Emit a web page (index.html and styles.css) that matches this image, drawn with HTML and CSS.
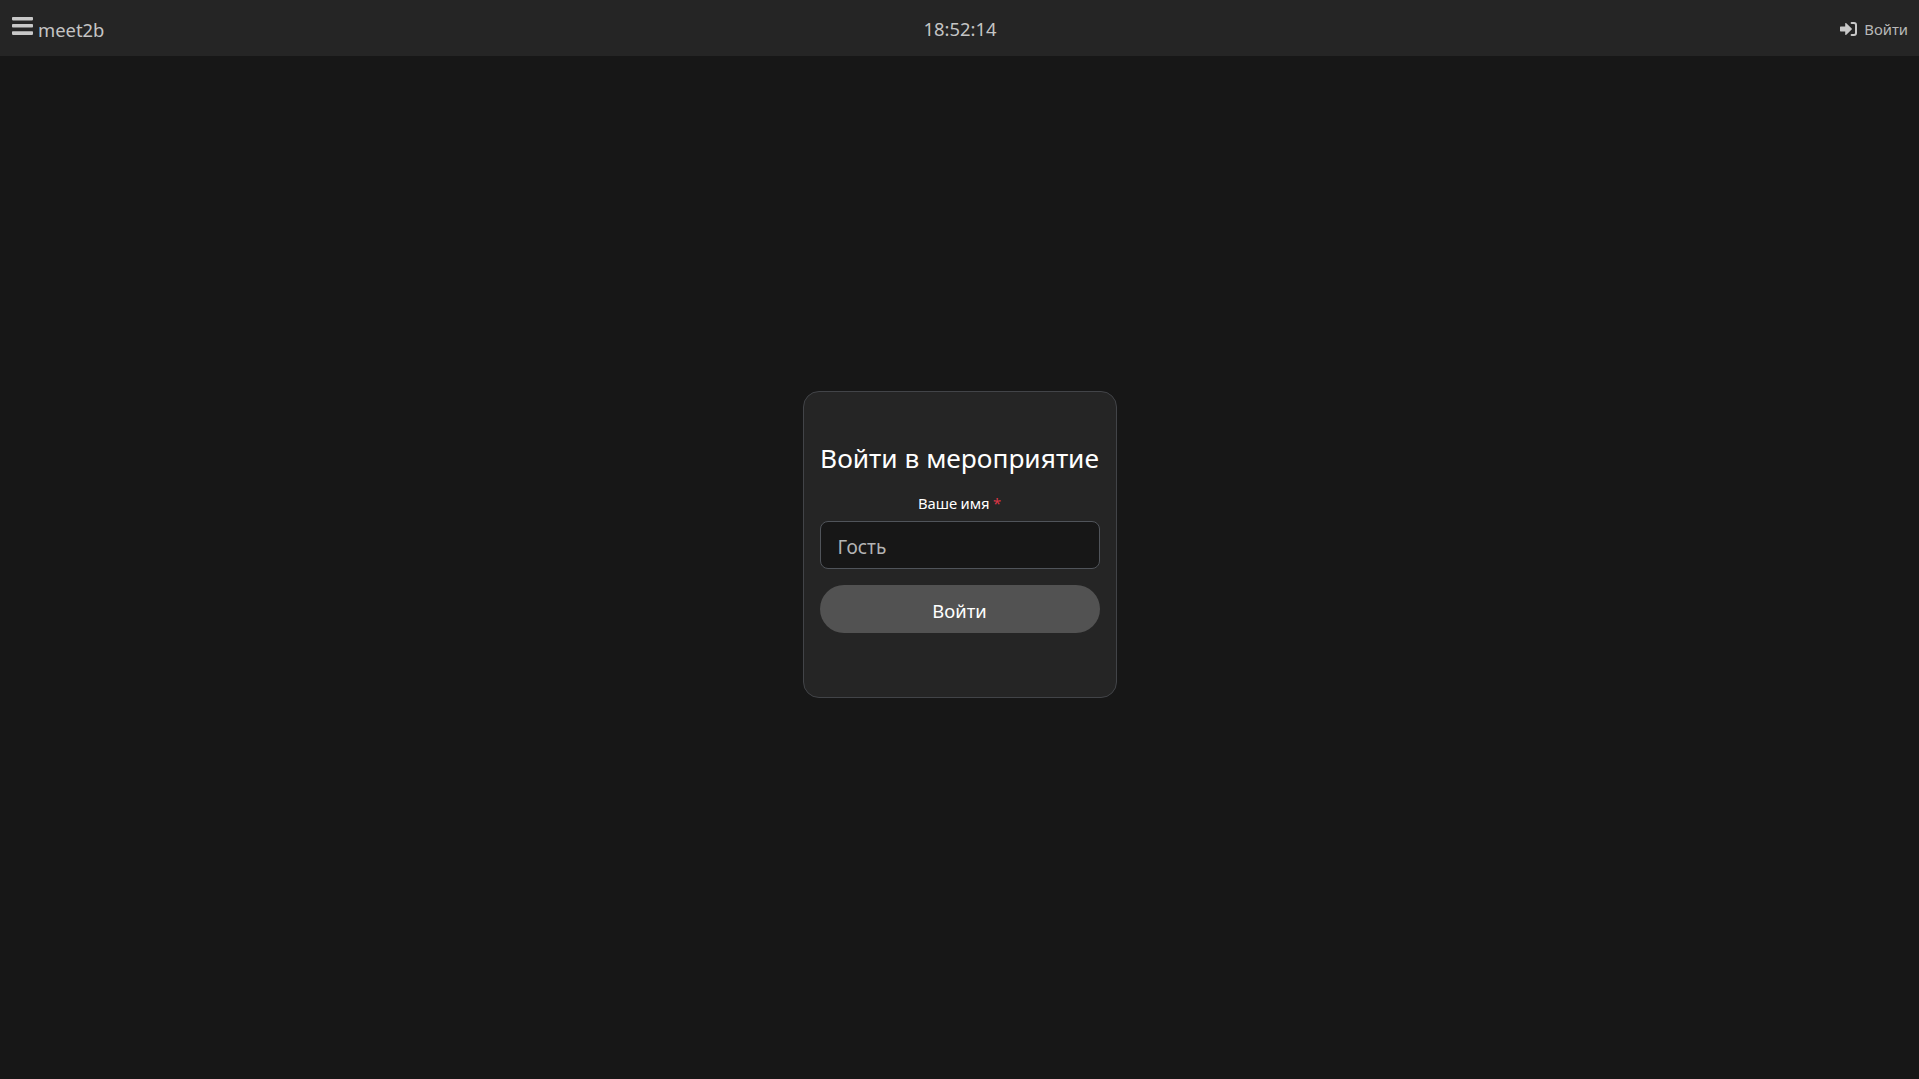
FILE: index.html
```html
<!DOCTYPE html>
<html lang="ru">
<head>
<meta charset="utf-8">
<title>meet2b</title>
<link rel="stylesheet" href="styles.css">
</head>
<body>
<header class="topbar">
  <div class="brand">
    <svg class="burger" viewBox="0 0 21 18" width="21" height="18" aria-hidden="true"><rect x="0" y="0" width="21" height="3.4" rx="0.8"/><rect x="0" y="7" width="21" height="3.6" rx="0.8"/><rect x="0" y="14.3" width="21" height="3.6" rx="0.8"/></svg>
    <span class="brand-name">meet2b</span>
  </div>
  <div class="clock">18:52:14</div>
  <a class="signin" href="#">
    <svg class="signin-icon" viewBox="0 0 17 14" width="17" height="14" aria-hidden="true"><path d="M0.6 4.6h4.6V1.4a0.5 0.5 0 0 1 0.85-0.35L11.7 6.5a0.7 0.7 0 0 1 0 1L6.05 12.95a0.5 0.5 0 0 1-0.85-0.35V9.4H0.6a0.6 0.6 0 0 1-0.6-0.6V5.2a0.6 0.6 0 0 1 0.6-0.6z"/><path d="M11.6 1h2.4a2 2 0 0 1 2 2v8a2 2 0 0 1-2 2h-2.4" fill="none" stroke="currentColor" stroke-width="2" stroke-linecap="round"/></svg>
    <span>Войти</span>
  </a>
</header>
<main class="stage">
  <form class="card">
    <h1 class="title">Войти в мероприятие</h1>
    <label class="label" for="name">Ваше имя <span class="req">*</span></label>
    <input class="field" id="name" type="text" value="Гость">
    <button class="submit" type="button">Войти</button>
  </form>
</main>
</body>
</html>
```
FILE: styles.css
```css
* { box-sizing: border-box; }
html, body { height: 100%; }
body {
  margin: 0;
  display: flex;
  flex-direction: column;
  background: #171717;
  font-family: "Noto Sans", "Open Sans", sans-serif;
  color: #fff;
  overflow: hidden;
}
.topbar {
  flex: none;
  height: 56px;
  background: #252525;
  display: grid;
  grid-template-columns: 1fr auto 1fr;
  align-items: center;
  padding: 0 11px 0 12px;
  color: #c4c4c4;
}
.brand { display: flex; align-items: flex-end; gap: 5px; padding-top: 3px; }
.burger { fill: #c8c8c8; margin-bottom: 8px; }
.brand-name { font-size: 18.4px; line-height: 26px; }
.clock { font-size: 18.4px; line-height: 26px; margin-top: 1px; }
.signin {
  justify-self: end;
  display: flex;
  align-items: center;
  gap: 7px;
  color: #b8b8b8;
  text-decoration: none;
  font-size: 14.8px;
  margin-top: 1px;
}
.signin-icon { fill: #c8c8c8; color: #c8c8c8; }
.stage {
  flex: 1;
  display: flex;
  align-items: flex-start;
  justify-content: center;
  padding-top: 335px;
}
.card {
  width: 314px;
  height: 307px;
  background: #252525;
  border: 1px solid #424448;
  border-radius: 16px;
  padding: 46px 16px 0;
  display: flex;
  flex-direction: column;
  align-items: stretch;
}
.title {
  margin: 0;
  font-size: 26.3px;
  font-weight: 400;
  line-height: 40px;
  text-align: center;
  white-space: nowrap;
}
.label {
  margin-top: 15px;
  font-size: 14.8px;
  line-height: 20px;
  text-align: center;
  word-spacing: -0.5px;
}
.req { color: #dc3545; }
.field {
  margin-top: 8px;
  width: 100%;
  height: 48px;
  background: #171717;
  border: 1px solid #50545a;
  border-radius: 8px;
  padding: 4px 17px 0;
  color: #b4b4b4;
  font: inherit;
  font-size: 19px;
  outline: none;
}
.submit {
  margin-top: 16px;
  height: 48px;
  width: 100%;
  background: #525252;
  border: 0;
  border-radius: 24px;
  color: #fff;
  font: inherit;
  font-size: 18.4px;
  padding: 2px 0 0;
}
```
